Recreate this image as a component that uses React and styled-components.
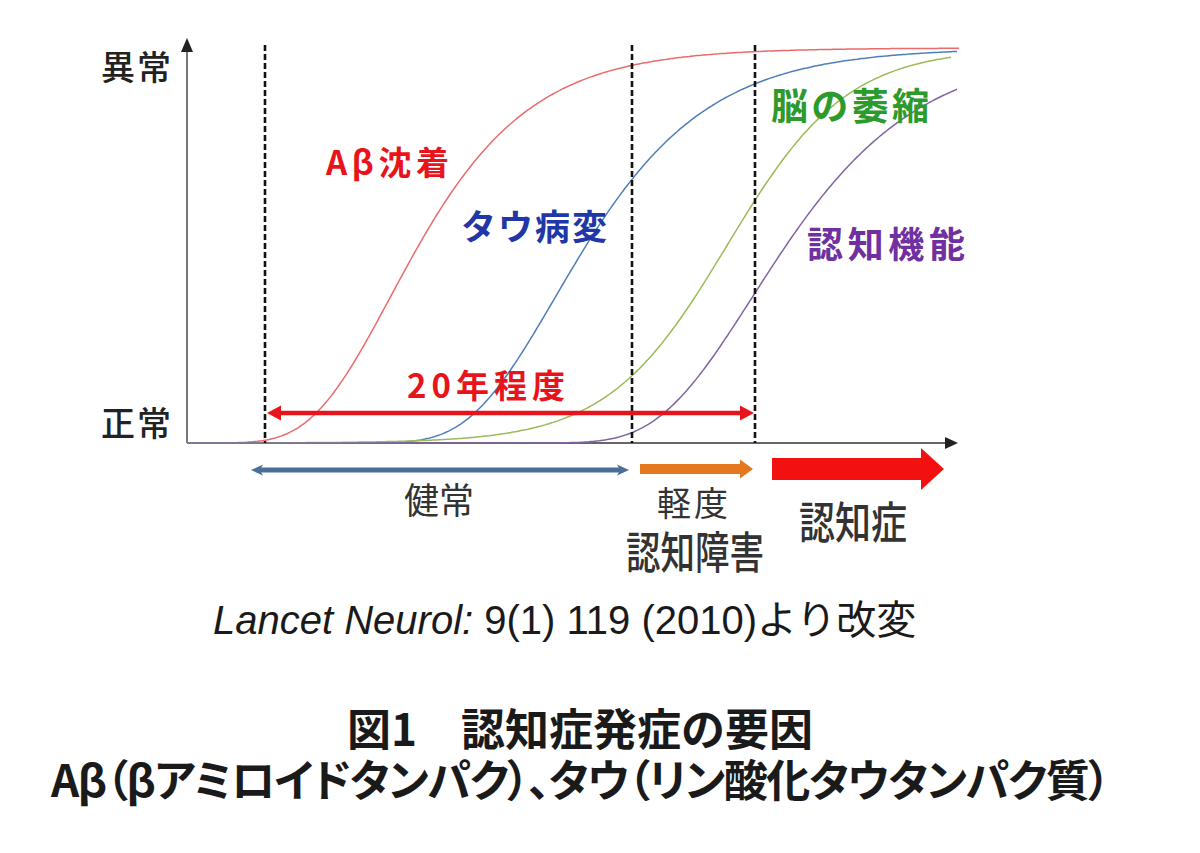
import React from 'react';
import styled, { createGlobalStyle } from 'styled-components';

const GlobalStyle = createGlobalStyle`
  html, body { margin: 0; padding: 0; background: #fff; }
  body { width: 1200px; height: 853px; overflow: hidden; }
`;

const Page = styled.main`
  display: flex;
  flex-direction: column;
  width: 1200px;
  height: 853px;
  background: #fff;
`;

const Chart = styled.svg`
  display: block;
  flex: none;
  width: 1200px;
  height: 580px;
`;

const ChartLabel = styled.text`
  font-family: "Noto Sans CJK JP", "Noto Sans", sans-serif;
  font-size: ${p => p.$size}px;
  font-weight: ${p => p.$weight};
  fill: ${p => p.$color};
`;

const Citation = styled.p`
  margin: 16px 0 0;
  padding-left: 213px;
  font-family: "Liberation Sans", "Noto Sans CJK JP", sans-serif;
  font-size: 40px;
  line-height: 48px;
  color: #1a1a1a;
  white-space: nowrap;
`;

const Journal = styled.i`
  font-style: italic;
`;

const Caption = styled.div`
  margin-top: 58px;
  padding-right: 40px;
  display: flex;
  flex-direction: column;
  align-items: center;
  font-family: "Noto Sans CJK JP", "Liberation Serif", sans-serif;
  font-weight: 600;
  font-size: 44px;
  line-height: 51px;
  color: #1a1a1a;
`;

const CaptionLine = styled.div`
  white-space: nowrap;
  font-feature-settings: ${p => (p.$proportional ? '"palt" 1' : 'normal')};
  letter-spacing: ${p => (p.$proportional ? '-1.4px' : '0')};
`;

const BASE = 443;
const TOP = 48;
const gompertz = (m, s) => x => Math.exp(-Math.exp(-(x - m) / s));
const logistic = (m, s) => x => 1 / (1 + Math.exp(-(x - m) / s));

function curvePath(f, x0, x1) {
  const pts = [];
  for (let x = x0; x <= x1; x += 2) {
    pts.push(`${x},${(BASE - (BASE - TOP) * f(x)).toFixed(1)}`);
  }
  return 'M' + pts.join(' L');
}

const curves = [
  { color: '#ea6b6b', d: curvePath(gompertz(390, 78), 187, 960) },
  { color: '#4f7fb8', d: curvePath(gompertz(555, 85), 187, 958) },
  { color: '#9bbb59', d: curvePath(logistic(727, 60), 187, 952) },
  { color: '#8064a2', d: curvePath(gompertz(752, 93), 187, 958) },
];

const labels = [
  { text: '異常', x: 101, y: 80, size: 34, weight: 500, color: '#222', len: 70 },
  { text: '正常', x: 101, y: 436, size: 34, weight: 500, color: '#222', len: 70 },
  { text: 'Aβ沈着', x: 326, y: 175, size: 33, weight: 700, color: '#e8141b', len: 123 },
  { text: 'タウ病変', x: 461, y: 240, size: 35, weight: 700, color: '#2137a8', len: 146 },
  { text: '脳の萎縮', x: 771, y: 120, size: 37, weight: 700, color: '#2c9b2c', len: 158 },
  { text: '認知機能', x: 807, y: 258, size: 36, weight: 700, color: '#7030a0', len: 158 },
  { text: '20年程度', x: 407, y: 398, size: 33, weight: 700, color: '#e8141b', len: 158 },
  { text: '健常', x: 404, y: 514, size: 36, weight: 400, color: '#333', len: 70, squeeze: true },
  { text: '軽度', x: 657, y: 516, size: 34, weight: 400, color: '#333', len: 71 },
  { text: '認知障害', x: 626, y: 569, size: 44, weight: 500, color: '#333', len: 138, squeeze: true },
  { text: '認知症', x: 799, y: 539, size: 44, weight: 500, color: '#333', len: 108, squeeze: true },
];

const dashedX = [265, 632, 755];

export default function App() {
  return (
    <>
      <GlobalStyle />
      <Page>
        <Chart viewBox="0 0 1200 580" xmlns="http://www.w3.org/2000/svg">
          {/* axes */}
          <line x1="187" y1={BASE} x2="948" y2={BASE} stroke="#666" strokeWidth="2" />
          <polygon points="945,437 958,443 945,449" fill="#222" />
          <line x1="187" y1={BASE} x2="187" y2="50" stroke="#777" strokeWidth="2" />
          <polygon points="181,52 187,38 193,52" fill="#222" />

          {/* curves */}
          {curves.map((c, i) => (
            <path key={i} d={c.d} fill="none" stroke={c.color} strokeWidth="1.5" />
          ))}

          {/* dashed stage lines */}
          {dashedX.map(x => (
            <line key={x} x1={x} y1="45" x2={x} y2={BASE} stroke="#111" strokeWidth="2.6" strokeDasharray="6 3" />
          ))}

          {/* 20-year range arrow */}
          <line x1="278" y1="413" x2="742" y2="413" stroke="#e8141b" strokeWidth="4.5" />
          <polygon points="267,413 281,405.5 281,420.5" fill="#e8141b" />
          <polygon points="754,413 740,405.5 740,420.5" fill="#e8141b" />

          {/* stage arrows */}
          <line x1="258" y1="470" x2="622" y2="470" stroke="#4a6e9a" strokeWidth="5" />
          <polygon points="251,470 263,464.5 260,470 263,475.5" fill="#4a6e9a" />
          <polygon points="629,470 617,464.5 620,470 617,475.5" fill="#4a6e9a" />

          <rect x="640" y="464" width="102" height="10" fill="#e4781e" />
          <polygon points="740,459.5 753,469 740,478.5" fill="#e4781e" />

          <rect x="772" y="458" width="151" height="22" fill="#f21010" />
          <polygon points="921,448 944,469 921,490" fill="#f21010" />

          {labels.map(l => (
            <ChartLabel
              key={l.text}
              x={l.x}
              y={l.y}
              $size={l.size}
              $weight={l.weight}
              $color={l.color}
              textLength={l.len}
              lengthAdjust={l.squeeze ? 'spacingAndGlyphs' : 'spacing'}
            >
              {l.text}
            </ChartLabel>
          ))}
        </Chart>

        <Citation>
          <Journal>Lancet Neurol:</Journal> 9(1) 119 (2010)より改変
        </Citation>

        <Caption>
          <CaptionLine>図1　認知症発症の要因</CaptionLine>
          <CaptionLine $proportional>Aβ（βアミロイドタンパク）、タウ（リン酸化タウタンパク質）</CaptionLine>
        </Caption>
      </Page>
    </>
  );
}
